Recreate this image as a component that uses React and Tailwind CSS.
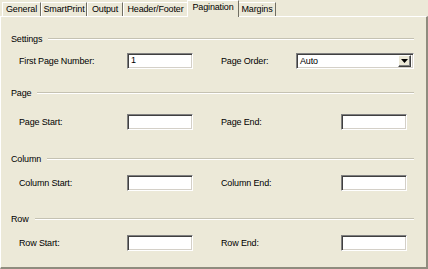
const tabs = [
  { label: 'General', w: 'w-[39px]' },
  { label: 'SmartPrint', w: 'w-[46px]' },
  { label: 'Output', w: 'w-[36px]' },
  { label: 'Header/Footer', w: 'w-[65px]' },
  { label: 'Pagination', w: 'w-[52px]', active: true },
  { label: 'Margins', w: 'w-[38px]' },
];

function Field({ value }) {
  return (
    <div className="h-[16px] w-[66px] bg-white border border-t-[#808080] border-l-[#808080] border-b-white border-r-white shadow-[inset_1px_1px_0_#404040,inset_-1px_-1px_0_#D4D0C8] flex items-center pl-[3px] text-black">
      {value}
    </div>
  );
}

function SectionHeader({ label, className = '' }) {
  return (
    <div className={`flex h-[12px] items-center ${className}`}>
      <span className="leading-none">{label}</span>
      <div className="ml-[6px] flex-1 border-t border-t-[#C5C2B2] border-b border-b-white"></div>
    </div>
  );
}

function Row({ left, right, leftValue, children, className = '' }) {
  return (
    <div className={`flex h-[16px] items-center pl-[8px] ${className}`}>
      <span className="w-[108px] leading-none">{left}</span>
      <Field value={leftValue} />
      <span className="ml-[28px] w-[120px] leading-none">{right}</span>
      <Field />
    </div>
  );
}

export default function App() {
  return (
    <div className="w-[428px] h-[269px] bg-[#ECE9D8] text-[9px] tracking-[-0.15px] text-black overflow-hidden font-['Liberation_Sans',Arial,sans-serif] flex flex-col">
      <div className="flex h-[16px] items-end pl-[2px]">
        {tabs.map((t) =>
          t.active ? (
            <div
              key={t.label}
              className={`${t.w} relative z-10 -mx-[1px] -mb-[1px] h-[17px] bg-[#ECE9D8] border-t border-l border-t-white border-l-white border-r border-r-[#716F64] flex items-start justify-center pt-[2px] leading-none`}
            >
              {t.label}
            </div>
          ) : (
            <div
              key={t.label}
              className={`${t.w} h-[14px] border-t border-l border-t-white border-l-white border-r border-r-[#716F64] bg-[#ECE9D8] flex items-center justify-center leading-none`}
            >
              {t.label}
            </div>
          )
        )}
      </div>

      <div className="flex-1 border-t border-l border-t-white border-l-white border-r-2 border-r-[#8F8C7E] border-b-2 border-b-[#8F8C7E] pl-[10px] pr-[12px] pt-[16px]">
        <SectionHeader label="Settings" />
        <div className="mt-[8px] flex h-[16px] items-center pl-[8px]">
          <span className="w-[108px] leading-none">First Page Number:</span>
          <Field value="1" />
          <span className="ml-[28px] w-[75px] leading-none">Page Order:</span>
          <div className="h-[16px] flex-1 bg-white border border-t-[#808080] border-l-[#808080] border-b-white border-r-white shadow-[inset_1px_1px_0_#404040,inset_-1px_-1px_0_#D4D0C8] flex items-center pl-[3px] pr-[2px]">
            <span className="flex-1 leading-none">Auto</span>
            <div className="h-[12px] w-[13px] bg-[#ECE9D8] border border-t-white border-l-white border-b-[#404040] border-r-[#404040] shadow-[inset_-1px_-1px_0_#808080] flex items-center justify-center">
              <svg width="7" height="4" viewBox="0 0 7 4">
                <path d="M0 0h7L3.5 4z" fill="#000" />
              </svg>
            </div>
          </div>
        </div>

        <SectionHeader label="Page" className="mt-[18px]" />
        <Row left="Page Start:" right="Page End:" className="mt-[15px]" />

        <SectionHeader label="Column" className="mt-[23px]" />
        <Row left="Column Start:" right="Column End:" className="mt-[10px]" />

        <SectionHeader label="Row" className="mt-[22px]" />
        <Row left="Row Start:" right="Row End:" className="mt-[10px]" />
      </div>
    </div>
  );
}
